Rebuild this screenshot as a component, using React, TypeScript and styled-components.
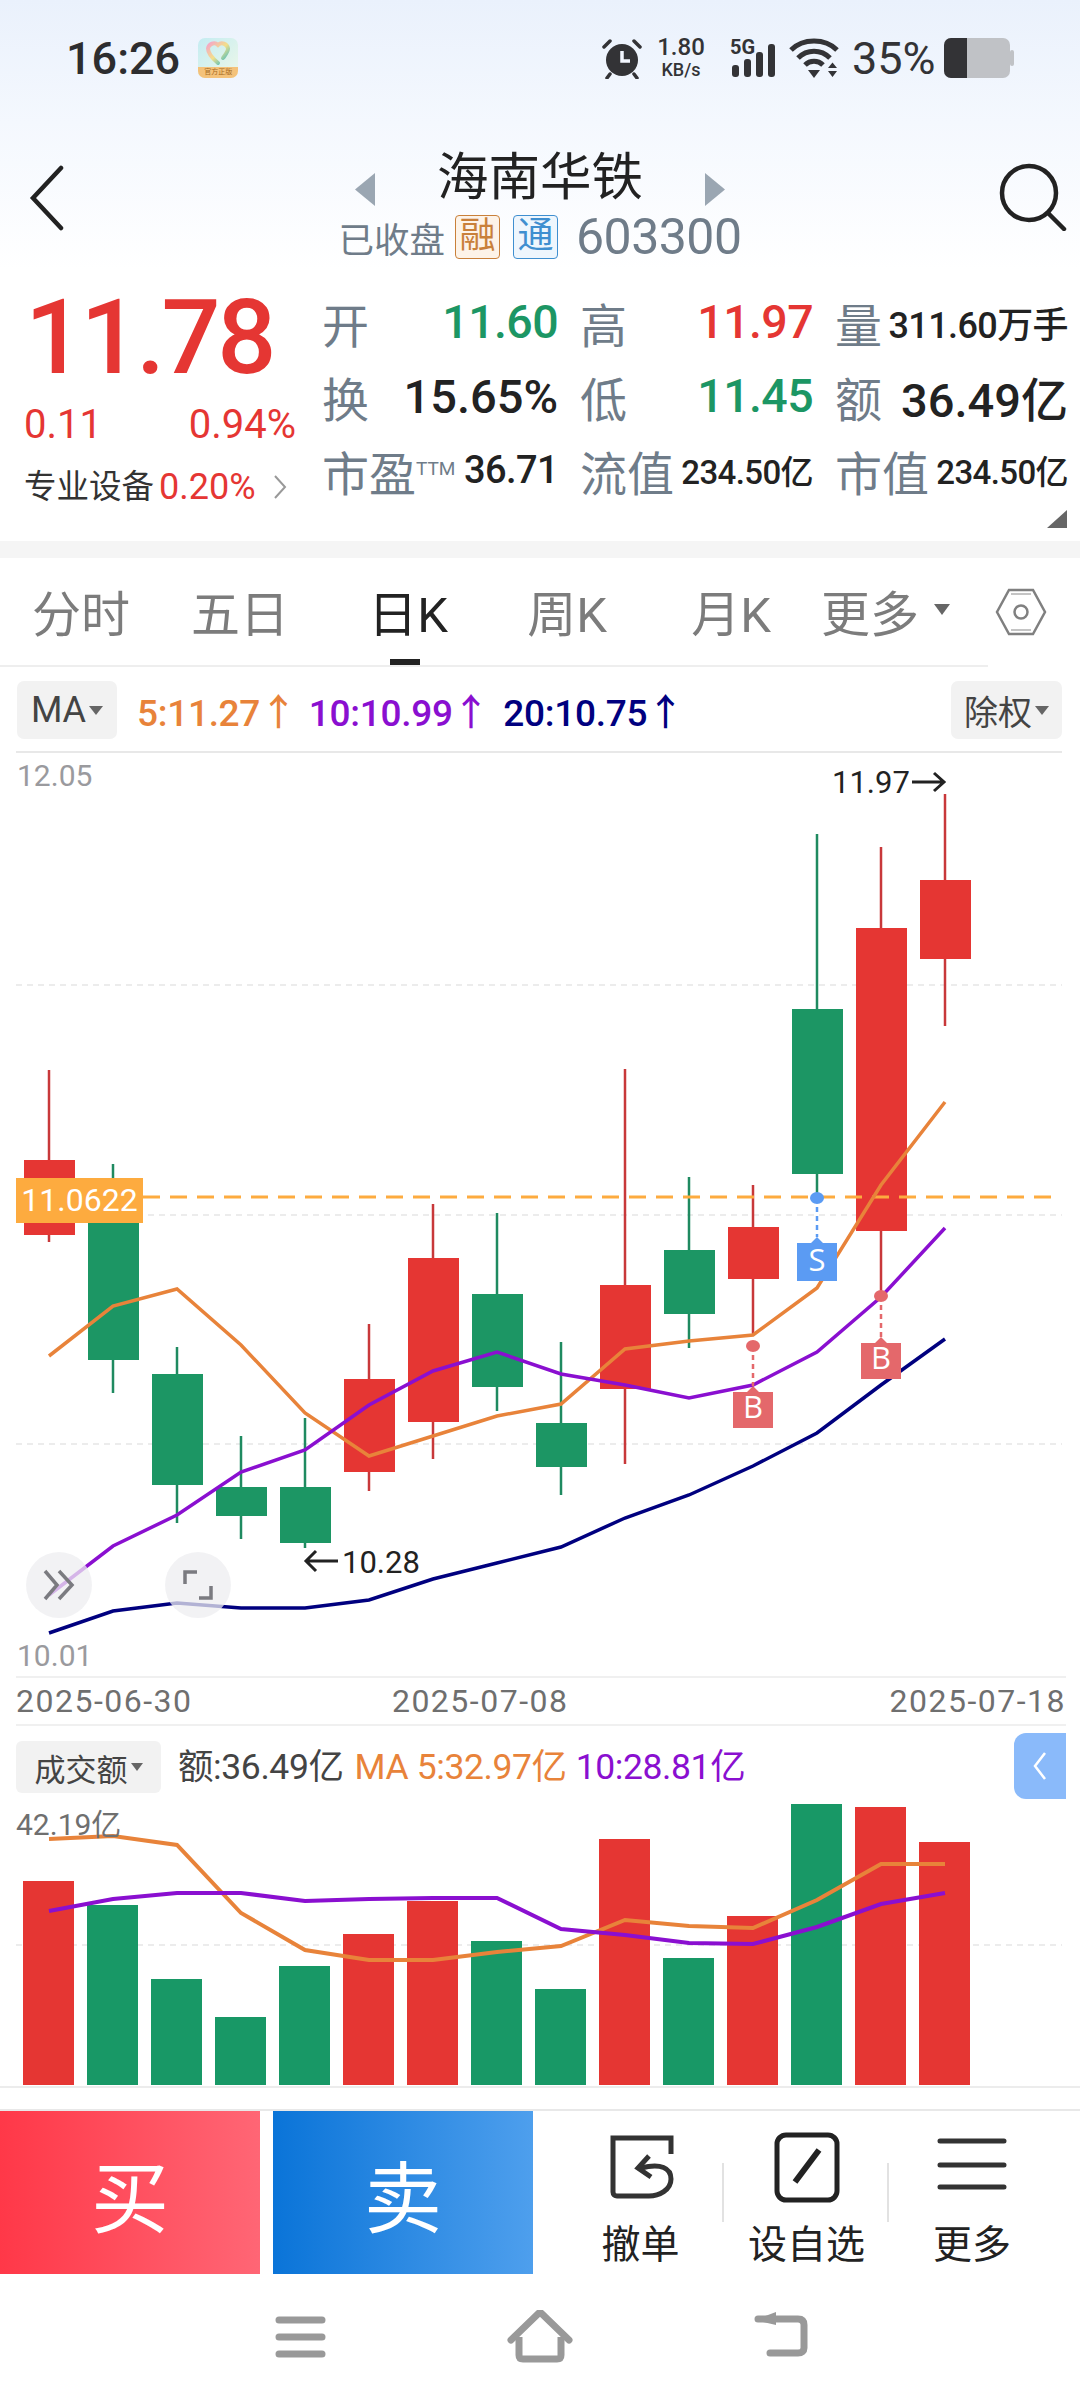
import { styled, createGlobalStyle } from "styled-components";

const RED = "#e53633";
const GREEN = "#1c9664";
const ORANGE = "#e8833a";
const PURPLE = "#8a0fd0";
const NAVY = "#00007f";
const GREY = "#6f7c89";

const GlobalStyle = createGlobalStyle`
  html, body {
    margin: 0;
    padding: 0;
    background: #fff;
  }
  body {
    font-family: Roboto, "Noto Sans CJK SC", sans-serif;
    color: #222;
  }
  * {
    box-sizing: border-box;
  }
`;

const Page = styled.div`
  width: 1080px;
  height: 2400px;
  overflow: hidden;
  background: #fff;
`;

/* 顶部 */
const Header = styled.header`
  height: 270px;
  background: linear-gradient(180deg, #eaf1fc 0%, #f4f8fe 45%, #ffffff 100%);
`;

const StatusBar = styled.div`
  height: 116px;
  padding: 0 66px;
  display: flex;
  align-items: center;
  justify-content: space-between;
`;

const StatusLeft = styled.div`
  display: flex;
  align-items: center;
  gap: 18px;
`;

const Time = styled.div`
  font-size: 45px;
  font-weight: 500;
  color: #2d2d2f;
`;

const AppIcon = styled.div`
  position: relative;
  width: 40px;
  height: 40px;
  border-radius: 7px;
  overflow: hidden;
  background: linear-gradient(135deg, #c4ecf2, #eef8e8);
  display: flex;
  justify-content: center;
`;

const AppIconFoot = styled.div`
  position: absolute;
  left: 0;
  right: 0;
  bottom: 0;
  height: 11px;
  background: #f4c27a;
  color: #a66a1e;
  font-size: 7px;
  line-height: 11px;
  text-align: center;
  white-space: nowrap;
`;

const StatusRight = styled.div`
  display: flex;
  align-items: center;
`;

const Speed = styled.div`
  width: 58px;
  margin-left: 9px;
  text-align: center;
  color: #333336;
  font-weight: 500;
  line-height: 1;
`;

const SpeedTop = styled.div`
  font-size: 24px;
  line-height: 23px;
`;

const SpeedBottom = styled.div`
  font-size: 18px;
  line-height: 21px;
`;

const Battery = styled.div`
  font-size: 45px;
  color: #333336;
  margin-left: 11px;
  width: 92px;
`;

const NavBar = styled.div`
  height: 154px;
  padding: 29px 13px 0 27px;
  display: grid;
  grid-template-columns: 80px 1fr 80px;
`;

const Center = styled.div`
  display: flex;
  flex-direction: column;
  align-items: center;
`;

const TitleRow = styled.div`
  height: 66px;
  display: flex;
  align-items: center;
  gap: 62px;
  margin-left: -14px;
`;

const Title = styled.div`
  font-size: 51.5px;
  line-height: 60px;
  color: #222;
`;

const SubRow = styled.div`
  display: flex;
  align-items: center;
  margin-top: 4px;
  height: 44px;
  margin-left: -14px;
  color: ${GREY};
`;

const SubText = styled.span`
  font-size: 35.5px;
  margin-right: -3px;
`;

const Badge = styled.span<{ $color: string; $bg: string }>`
  width: 45px;
  height: 44px;
  margin-left: 13px;
  border: 1.5px solid ${(p) => p.$color};
  border-radius: 4px;
  background: ${(p) => p.$bg};
  color: ${(p) => p.$color};
  font-size: 36px;
  line-height: 40px;
  text-align: center;
`;

const Code = styled.span`
  font-size: 50px;
  margin-left: 18px;
  letter-spacing: -0.5px;
`;

/* 行情 */
const Quote = styled.section`
  height: 271px;
  padding: 16px 12px 0 24px;
  position: relative;
  display: grid;
  grid-template-columns: 298px 1fr;
`;

const PriceCol = styled.div`
  display: flex;
  flex-direction: column;
`;

const Price = styled.div`
  font-size: 104px;
  line-height: 104px;
  font-weight: 500;
  color: ${RED};
  letter-spacing: -3.5px;
  margin-left: 1px;
`;

const ChangeRow = styled.div`
  display: flex;
  justify-content: space-between;
  margin: 12px 26px 0 0;
  font-size: 40px;
  line-height: 46px;
  color: ${RED};
`;

const SectorRow = styled.div`
  display: flex;
  align-items: center;
  margin-top: 17px;
  font-size: 32.5px;
  line-height: 44px;
  color: #333;
`;

const SectorPct = styled.span`
  color: ${RED};
  margin-left: 5px;
  font-size: 36px;
`;

const Stats = styled.div`
  display: grid;
  grid-template-columns: 233px 230px 233px;
  grid-auto-rows: 74px;
  column-gap: 25px;
  margin-top: -1px;
`;

const Stat = styled.div`
  display: flex;
  align-items: center;
  justify-content: space-between;
  white-space: nowrap;
`;

const StatLabel = styled.span`
  font-size: 47px;
  color: ${GREY};
`;

const Ttm = styled.sup`
  font-size: 19px;
  line-height: 0;
  vertical-align: 16px;
`;

const StatValue = styled.span<{ $color?: string; $size?: number; $nudge?: boolean }>`
  font-size: ${(p) => p.$size || 47}px;
  font-weight: 500;
  color: ${(p) => p.$color || "#222"};
  ${(p) => (p.$size ? "letter-spacing: -0.6px;" : "")}
  ${(p) => (p.$nudge ? "margin-right: -3px;" : "")}
`;

const Corner = styled.div`
  position: absolute;
  right: 13px;
  bottom: 13px;
  width: 20px;
  height: 18px;
  background: #666;
  clip-path: polygon(100% 0, 100% 100%, 0 100%);
`;

const Band = styled.div`
  height: 17px;
  background: #f5f5f5;
`;

/* 周期切换 */
const Tabs = styled.nav`
  height: 109px;
  padding: 0 0 0 8px;
  border-bottom: 2px solid #eeeeee;
  margin-right: 92px;
  display: flex;
  position: relative;
`;

const TabsWrap = styled.div`
  position: relative;
`;

const Tab = styled.div<{ $w: number; $active?: boolean }>`
  position: relative;
  width: ${(p) => p.$w}px;
  height: 107px;
  padding-top: 28px;
  text-align: center;
  font-size: 49px;
  line-height: 60px;
  color: ${(p) => (p.$active ? "#222" : "#7c7c7c")};
  ${(p) =>
    p.$active
      ? `&::after {
    content: "";
    position: absolute;
    left: 64px;
    bottom: 0;
    width: 30px;
    height: 6px;
    background: #222;
  }`
      : ""}
`;

const MoreTab = styled.div`
  height: 107px;
  padding: 28px 0 0 3px;
  display: flex;
  align-items: flex-start;
  font-size: 49px;
  line-height: 60px;
  color: #7c7c7c;
  white-space: nowrap;
`;

const Caret = styled.span<{ $size?: number; $color?: string }>`
  display: inline-block;
  width: 0;
  height: 0;
  border-left: ${(p) => (p.$size || 8)}px solid transparent;
  border-right: ${(p) => (p.$size || 8)}px solid transparent;
  border-top: ${(p) => (p.$size || 8) * 1.4}px solid ${(p) => p.$color || "#666"};
`;

const MoreCaret = styled(Caret)`
  margin: 18px 0 0 15px;
`;

const HexBtn = styled.div`
  position: absolute;
  left: 995px;
  top: 30px;
  width: 52px;
  height: 48px;
`;

/* 均线行 */
const MaRow = styled.div`
  height: 86px;
  margin: 0 18px 0 16px;
  border-bottom: 2px solid #e8e8e8;
  padding: 15px 0 13px 1px;
  display: flex;
  align-items: center;
`;

const Chip = styled.div<{ $w: number; $font?: number }>`
  width: ${(p) => p.$w}px;
  height: 58px;
  border-radius: 7px;
  background: #f2f2f2;
  color: #444;
  font-size: ${(p) => p.$font || 36}px;
  display: flex;
  align-items: center;
  justify-content: center;
  gap: 3px;
  white-space: nowrap;
`;

const MaText = styled.span<{ $color: string; $gap: number }>`
  color: ${(p) => p.$color};
  font-size: 37px;
  font-weight: 500;
  letter-spacing: -0.3px;
  margin-left: ${(p) => p.$gap}px;
  white-space: nowrap;
`;

const Spacer = styled.div`
  flex: 1;
`;

/* K线图 */
const ChartWrap = styled.div`
  position: relative;
  height: 923px;
`;

const ChartSvg = styled.svg`
  display: block;
  width: 1080px;
`;

const CostTag = styled.div`
  position: absolute;
  left: 16px;
  top: 425px;
  width: 127px;
  height: 45px;
  background: #fdab3f;
  color: #fff;
  font-size: 32px;
  line-height: 45px;
  text-align: center;
`;

const RoundBtn = styled.div<{ $left: number }>`
  position: absolute;
  left: ${(p) => p.$left}px;
  top: 799px;
  width: 66px;
  height: 66px;
  border-radius: 50%;
  background: rgba(238, 238, 240, 0.75);
  display: flex;
  align-items: center;
  justify-content: center;
`;

const DateRow = styled.div`
  height: 50px;
  margin: 0 14px 0 16px;
  border-top: 2px solid #f0f0f0;
  border-bottom: 2px solid #f0f0f0;
  display: flex;
  align-items: center;
  font-size: 32px;
  color: #6f6f6f;
  letter-spacing: 1.5px;
  white-space: nowrap;
`;

const DateCell = styled.span<{ $w: number }>`
  width: ${(p) => p.$w}px;
`;

/* 成交额 */
const VolHead = styled.div`
  position: relative;
  height: 73px;
  padding: 15px 0 0 16px;
  display: flex;
  align-items: flex-start;
`;

const VolChip = styled(Chip)`
  height: 52px;
  border-radius: 6px;
`;

const VolText = styled.span<{ $color: string; $gap: number }>`
  color: ${(p) => p.$color};
  font-size: 35.5px;
  line-height: 52px;
  margin-left: ${(p) => p.$gap}px;
  letter-spacing: -0.4px;
  white-space: nowrap;
`;

const SideTab = styled.div`
  position: absolute;
  left: 1014px;
  top: 7px;
  width: 52px;
  height: 66px;
  border-radius: 12px 0 0 12px;
  background: #8abafa;
  display: flex;
  align-items: center;
  justify-content: center;
`;

const VolWrap = styled.div`
  height: 289px;
  border-bottom: 2px solid #ececec;
  margin-bottom: 21px;
`;

const VolSvg = styled.svg`
  display: block;
  width: 1080px;
`;

/* 买卖 */
const ActionBar = styled.div`
  height: 166px;
  border-top: 2px solid #e8e8e8;
  display: flex;
`;

const TradeBtn = styled.div<{ $from: string; $to: string; $w: number }>`
  width: ${(p) => p.$w}px;
  height: 163px;
  background: linear-gradient(90deg, ${(p) => p.$from}, ${(p) => p.$to});
  color: #fff;
  font-size: 78px;
  display: flex;
  align-items: center;
  justify-content: center;
`;

const SellBtn = styled(TradeBtn)`
  margin-left: 13px;
`;

const Tools = styled.div`
  flex: 1;
  display: flex;
  padding-left: 24px;
  padding-right: 25px;
`;

const Tool = styled.div<{ $w: number; $divider?: boolean }>`
  position: relative;
  width: ${(p) => p.$w}px;
  display: flex;
  flex-direction: column;
  align-items: center;
  padding-top: 21px;
  font-size: 39px;
  line-height: 46px;
  color: #222;
  ${(p) =>
    p.$divider
      ? `&::after {
    content: "";
    position: absolute;
    right: 0;
    top: 52px;
    width: 2px;
    height: 59px;
    background: #e2e2e2;
  }`
      : ""}
`;

const ToolIcon = styled.svg`
  width: 72px;
  height: 72px;
  margin-bottom: 18px;
`;

const BottomNav = styled.div`
  height: 125px;
  display: grid;
  grid-template-columns: 300px 240px 245px;
`;

const NavCell = styled.div`
  display: flex;
  justify-content: flex-end;
  align-items: flex-start;
  padding-top: 35px;
`;

const NavIcon = styled.svg`
  width: 70px;
  height: 64px;
  transform: translateX(35px);
`;

type Candle = { x: number; hi: number; top: number; bot: number; lo: number; up: boolean };

const candles: Candle[] = [
  { x: 49, hi: 1070, top: 1160, bot: 1235, lo: 1242, up: true },
  { x: 113, hi: 1164, top: 1190, bot: 1360, lo: 1393, up: false },
  { x: 177, hi: 1347, top: 1374, bot: 1485, lo: 1523, up: false },
  { x: 241, hi: 1436, top: 1487, bot: 1516, lo: 1539, up: false },
  { x: 305, hi: 1418, top: 1487, bot: 1543, lo: 1548, up: false },
  { x: 369, hi: 1324, top: 1379, bot: 1472, lo: 1491, up: true },
  { x: 433, hi: 1204, top: 1258, bot: 1422, lo: 1459, up: true },
  { x: 497, hi: 1213, top: 1294, bot: 1387, lo: 1411, up: false },
  { x: 561, hi: 1342, top: 1423, bot: 1467, lo: 1495, up: false },
  { x: 625, hi: 1069, top: 1285, bot: 1389, lo: 1464, up: true },
  { x: 689, hi: 1177, top: 1250, bot: 1314, lo: 1348, up: false },
  { x: 753, hi: 1185, top: 1227, bot: 1279, lo: 1334, up: true },
  { x: 817, hi: 834, top: 1009, bot: 1174, lo: 1196, up: false },
  { x: 881, hi: 847, top: 928, bot: 1231, lo: 1297, up: true },
  { x: 945, hi: 794, top: 880, bot: 959, lo: 1026, up: true },
];

const xs = candles.map((c) => c.x);
const line = (ys: number[]) => ys.map((y, i) => `${xs[i]},${y}`).join(" ");

const ma5 = [1356, 1306, 1289, 1345, 1413, 1456, 1436, 1416, 1404, 1349, 1341, 1335, 1288, 1185, 1102];
const ma10 = [1595, 1546, 1515, 1472, 1450, 1405, 1371, 1352, 1374, 1385, 1398, 1385, 1352, 1297, 1228];
const ma20 = [1633, 1611, 1603, 1608, 1608, 1600, 1579, 1563, 1547, 1518, 1495, 1466, 1433, 1385, 1339];

const bars = [
  { top: 1881, up: true },
  { top: 1905, up: false },
  { top: 1979, up: false },
  { top: 2017, up: false },
  { top: 1966, up: false },
  { top: 1934, up: true },
  { top: 1901, up: true },
  { top: 1941, up: false },
  { top: 1989, up: false },
  { top: 1839, up: true },
  { top: 1958, up: false },
  { top: 1916, up: true },
  { top: 1804, up: false },
  { top: 1807, up: true },
  { top: 1842, up: true },
];

const volMa5 = [1839, 1836, 1845, 1913, 1950, 1960, 1960, 1952, 1946, 1920, 1926, 1928, 1900, 1864, 1864];
const volMa10 = [1911, 1899, 1893, 1893, 1901, 1899, 1898, 1898, 1929, 1935, 1943, 1944, 1927, 1904, 1893];

const Signal = ({ x, dot, top, bottom, color, label }: { x: number; dot: number; top: number; bottom: number; color: string; label: string }) => (
  <g>
    <line x1={x} y1={dot} x2={x} y2={top} stroke={color} strokeWidth="2.5" strokeDasharray="5 4" />
    <ellipse cx={x} cy={dot} rx="7" ry="6" fill={color} />
    <path d={`M${x - 20} ${top + 6}H${x - 6}L${x} ${top}L${x + 6} ${top + 6}H${x + 20}V${bottom}H${x - 20}Z`} fill={color} />
    <text x={x} y={bottom - 10} textAnchor="middle" fontSize="31" fill="#fff" fontFamily="'Open Sans', sans-serif">
      {label}
    </text>
  </g>
);

export default function App() {
  return (
    <Page>
      <GlobalStyle />
      <Header>
        <StatusBar>
          <StatusLeft>
            <Time>16:26</Time>
            <AppIcon>
              <svg width="30" height="30" viewBox="0 0 30 30">
                <defs>
                  <linearGradient id="appHeart" x1="0" y1="0" x2="1" y2="1">
                    <stop offset="0" stopColor="#f4a6c8" />
                    <stop offset="0.5" stopColor="#f3e08a" />
                    <stop offset="1" stopColor="#29b6c9" />
                  </linearGradient>
                </defs>
                <path d="M15 25C9 20 5 15 5 10.500A6 6 0 0 1 15 7A6 6 0 0 1 25 10.500C25 14 22 17 20 20" fill="none" stroke="url(#appHeart)" strokeWidth="4" strokeLinecap="round" />
              </svg>
              <AppIconFoot>官方正版</AppIconFoot>
            </AppIcon>
          </StatusLeft>
          <StatusRight>
            <svg width="42" height="42" viewBox="0 0 42 42">
              <circle cx="21" cy="23" r="16" fill="#333336" />
              <path d="M21 14V24H29" fill="none" stroke="#f2f6fe" strokeWidth="3.500" />
              <path d="M3 10L9 4M39 10L33 4M9 37L6 41M33 37L36 41" stroke="#333336" strokeWidth="3.500" strokeLinecap="round" />
            </svg>
            <Speed>
              <SpeedTop>1.80</SpeedTop>
              <SpeedBottom>KB/s</SpeedBottom>
            </Speed>
            <svg width="50" height="50" viewBox="0 -4 50 50" style={{ marginLeft: 20, marginRight: 9 }}>
              <text x="0" y="17" fontSize="20" fontWeight="700" fill="#333336" fontFamily="Roboto, sans-serif">5G</text>
              <rect x="2" y="28" width="7" height="12" rx="3" fill="#333336" />
              <rect x="14" y="22" width="7" height="18" rx="3" fill="#333336" />
              <rect x="26" y="15" width="7" height="25" rx="3" fill="#333336" />
              <rect x="38" y="7" width="7" height="33" rx="3" fill="#333336" />
            </svg>
            <svg width="52" height="42" viewBox="0 0 52 42">
              <path d="M2 13C14 1 36 1 48 13M9 21C18 12 32 12 41 21M16 28C21 23 29 23 34 28" fill="none" stroke="#333336" strokeWidth="5" />
              <path d="M19 33H31L25 41Z" fill="#333336" />
              <path d="M39 31L43.500 25.500L48 31ZM39 34H48L43.500 40Z" fill="#333336" />
            </svg>
            <Battery>35%</Battery>
            <svg width="70" height="42" viewBox="0 0 70 42">
              <rect x="0" y="1" width="66" height="40" rx="7" fill="#c0c2c6" />
              <path d="M7 1H23V41H7A7 7 0 0 1 0 34V8A7 7 0 0 1 7 1Z" fill="#333336" />
              <rect x="66" y="13" width="4" height="16" rx="2" fill="#c0c2c6" />
            </svg>
          </StatusRight>
        </StatusBar>
        <NavBar>
          <svg width="40" height="66" viewBox="0 0 40 66" style={{ marginTop: 20 }}>
            <path d="M34 3L6 33L34 63" fill="none" stroke="#222" strokeWidth="4.500" strokeLinecap="round" />
          </svg>
          <Center>
            <TitleRow>
              <svg width="20" height="33" viewBox="0 0 20 33" style={{ marginTop: 22 }}>
                <path d="M20 0V33L0 16.500Z" fill="#9aa6b2" />
              </svg>
              <Title>海南华铁</Title>
              <svg width="20" height="33" viewBox="0 0 20 33" style={{ marginTop: 22 }}>
                <path d="M0 0V33L20 16.500Z" fill="#9aa6b2" />
              </svg>
            </TitleRow>
            <SubRow>
              <SubText>已收盘</SubText>
              <Badge $color="#c9803a" $bg="#fdf3e8">融</Badge>
              <Badge $color="#3f8fd0" $bg="#eef6fd">通</Badge>
              <Code>603300</Code>
            </SubRow>
          </Center>
          <svg width="70" height="68" viewBox="0 0 70 68" style={{ marginTop: 18, justifySelf: "end" }}>
            <circle cx="32" cy="30" r="27" fill="none" stroke="#222" strokeWidth="4.500" />
            <path d="M51 50L67 66" stroke="#222" strokeWidth="4.500" strokeLinecap="round" />
          </svg>
        </NavBar>
      </Header>

      <Quote>
        <PriceCol>
          <Price>11.78</Price>
          <ChangeRow>
            <span>0.11</span>
            <span>0.94%</span>
          </ChangeRow>
          <SectorRow>
            专业设备
            <SectorPct>0.20%</SectorPct>
            <svg width="14" height="26" viewBox="0 0 14 26" style={{ marginLeft: 17 }}>
              <path d="M2 2L12 13L2 24" fill="none" stroke="#999" strokeWidth="2" />
            </svg>
          </SectorRow>
        </PriceCol>
        <Stats>
          <Stat><StatLabel>开</StatLabel><StatValue $color={GREEN} $size={46.500} $nudge>11.60</StatValue></Stat>
          <Stat><StatLabel>高</StatLabel><StatValue $color={RED} $size={46.500} $nudge>11.97</StatValue></Stat>
          <Stat><StatLabel>量</StatLabel><StatValue $size={36}>311.60万手</StatValue></Stat>
          <Stat><StatLabel>换</StatLabel><StatValue $nudge>15.65%</StatValue></Stat>
          <Stat><StatLabel>低</StatLabel><StatValue $color={GREEN} $size={46.500} $nudge>11.45</StatValue></Stat>
          <Stat><StatLabel>额</StatLabel><StatValue>36.49亿</StatValue></Stat>
          <Stat><StatLabel>市盈<Ttm>TTM</Ttm></StatLabel><StatValue $size={38} $nudge>36.71</StatValue></Stat>
          <Stat><StatLabel>流值</StatLabel><StatValue $size={33} $nudge>234.50亿</StatValue></Stat>
          <Stat><StatLabel>市值</StatLabel><StatValue $size={33}>234.50亿</StatValue></Stat>
        </Stats>
        <Corner />
      </Quote>
      <Band />

      <TabsWrap>
        <Tabs>
          <Tab $w={146}>分时</Tab>
          <Tab $w={172}>五日</Tab>
          <Tab $w={164} $active>日K</Tab>
          <Tab $w={154}>周K</Tab>
          <Tab $w={174}>月K</Tab>
          <MoreTab>更多<MoreCaret /></MoreTab>
        </Tabs>
        <HexBtn>
          <svg width="52" height="48" viewBox="0 0 52 48">
            <path d="M14 2H38L50 24L38 46H14L2 24Z" fill="none" stroke="#808080" strokeWidth="2.500" />
            <path d="M16 6H36M16 42H36" stroke="#c4c4c4" strokeWidth="2" />
            <circle cx="26" cy="24" r="6.500" fill="none" stroke="#808080" strokeWidth="2.500" />
          </svg>
        </HexBtn>
      </TabsWrap>

      <MaRow>
        <Chip $w={100}>MA<Caret $size={7} /></Chip>
        <MaText $color={ORANGE} $gap={20}>5:11.27↑</MaText>
        <MaText $color={PURPLE} $gap={12}>10:10.99↑</MaText>
        <MaText $color={NAVY} $gap={14}>20:10.75↑</MaText>
        <Spacer />
        <Chip $w={111} $font={34}>除权<Caret $size={7} /></Chip>
      </MaRow>

      <ChartWrap>
        <ChartSvg height="923" viewBox="0 753 1080 923">
          {[985, 1215, 1444].map((y) => (
            <line key={y} x1="16" x2="1062" y1={y} y2={y} stroke="#ececec" strokeWidth="2" strokeDasharray="6 5" />
          ))}
          {candles.map((c) => {
            const color = c.up ? RED : GREEN;
            const wick = c.up ? "#c8383a" : "#1f8a60";
            return (
              <g key={c.x}>
                <line x1={c.x} x2={c.x} y1={c.hi} y2={c.lo} stroke={wick} strokeWidth="2.500" />
                <rect x={c.x - 25} y={c.top} width="51" height={c.bot - c.top} fill={color} />
              </g>
            );
          })}
          <line x1="143" x2="1060" y1="1197" y2="1197" stroke="#fdab3f" strokeWidth="3" strokeDasharray="17 10" />
          <polyline points={line(ma5)} fill="none" stroke={ORANGE} strokeWidth="3.500" />
          <polyline points={line(ma10)} fill="none" stroke={PURPLE} strokeWidth="3.500" />
          <polyline points={line(ma20)} fill="none" stroke={NAVY} strokeWidth="3.500" />
          <Signal x={817} dot={1198} top={1237} bottom={1281} color="#5b9bf3" label="S" />
          <Signal x={753} dot={1346} top={1386} bottom={1428} color="#e4686b" label="B" />
          <Signal x={881} dot={1296} top={1337} bottom={1379} color="#e4686b" label="B" />
          <text x="17" y="786" fontSize="30" fill="#9a9a9e">12.05</text>
          <text x="17" y="1666" fontSize="30" fill="#9a9a9e">10.01</text>
          <text x="832" y="793" fontSize="31" fill="#222">11.97</text>
          <path d="M912 782H943M934 773L944 782L934 791" fill="none" stroke="#222" strokeWidth="3" />
          <path d="M338 1561H306M316 1551L306 1561L316 1571" fill="none" stroke="#222" strokeWidth="3" />
          <text x="342" y="1573" fontSize="31" fill="#222">10.28</text>
        </ChartSvg>
        <CostTag>11.0622</CostTag>
        <RoundBtn $left={26}>
          <svg width="34" height="34" viewBox="0 0 34 34">
            <path d="M3 3L15 17L3 31M17 3L30 17L17 31" fill="none" stroke="#7b7b80" strokeWidth="3.500" />
          </svg>
        </RoundBtn>
        <RoundBtn $left={165}>
          <svg width="34" height="34" viewBox="0 0 34 34">
            <path d="M4 16V4H16M18 30H30V18" fill="none" stroke="#7b7b80" strokeWidth="3.500" />
          </svg>
        </RoundBtn>
      </ChartWrap>
      <DateRow>
        <DateCell $w={377}>2025-06-30</DateCell>
        <DateCell $w={499}>2025-07-08</DateCell>
        <span>2025-07-18</span>
      </DateRow>

      <VolHead>
        <VolChip $w={145} $font={31}>成交额<Caret $size={6} /></VolChip>
        <VolText $color="#444" $gap={17}>额:36.49亿</VolText>
        <VolText $color={ORANGE} $gap={11}>MA 5:32.97亿</VolText>
        <VolText $color={PURPLE} $gap={9}>10:28.81亿</VolText>
        <SideTab>
          <svg width="16" height="30" viewBox="0 0 16 30">
            <path d="M13 2L3 15L13 28" fill="none" stroke="#fff" strokeWidth="2.500" />
          </svg>
        </SideTab>
      </VolHead>
      <VolWrap>
        <VolSvg height="287" viewBox="0 1799 1080 287">
          <line x1="16" x2="1062" y1="1945" y2="1945" stroke="#ececec" strokeWidth="2" strokeDasharray="6 5" />
          {bars.map((b, i) => (
            <rect key={xs[i]} x={xs[i] - 26} y={b.top} width="51" height={2085 - b.top} fill={b.up ? RED : "#189866"} />
          ))}
          <polyline points={line(volMa5)} fill="none" stroke={ORANGE} strokeWidth="4" />
          <polyline points={line(volMa10)} fill="none" stroke={PURPLE} strokeWidth="4" />
          <text x="16" y="1835" fontSize="30" fill="#6f6f6f">42.19亿</text>
        </VolSvg>
      </VolWrap>

      <ActionBar>
        <TradeBtn $w={260} $from="#ff3848" $to="#ff6675">买</TradeBtn>
        <SellBtn $w={260} $from="#0a74d8" $to="#4e9fed">卖</SellBtn>
        <Tools>
          <Tool $w={167} $divider>
            <ToolIcon viewBox="0 0 72 72">
              <path d="M66 22V6H8V60C8 63 10 64 12 64H44C54 64 66 58 66 47C66 36 56 31 36 36" fill="none" stroke="#333" strokeWidth="5" />
              <path d="M44 24L33 36L46 45" fill="none" stroke="#333" strokeWidth="5" />
            </ToolIcon>
            撤单
          </Tool>
          <Tool $w={165} $divider>
            <ToolIcon viewBox="0 0 72 72">
              <rect x="6" y="3" width="60" height="65" rx="9" fill="none" stroke="#222" strokeWidth="5" />
              <path d="M48 18L24 50" stroke="#222" strokeWidth="6" />
            </ToolIcon>
            设自选
          </Tool>
          <Tool $w={166}>
            <ToolIcon viewBox="0 0 72 72">
              <path d="M4 9H68M4 33H68M4 55H68" stroke="#333" strokeWidth="5" strokeLinecap="round" />
            </ToolIcon>
            更多
          </Tool>
        </Tools>
      </ActionBar>

      <BottomNav>
        <NavCell>
          <NavIcon viewBox="0 0 70 64">
            <path d="M14 10H57M14 27H57M14 44H57" stroke="#999" strokeWidth="7" strokeLinecap="round" />
          </NavIcon>
        </NavCell>
        <NavCell>
          <NavIcon viewBox="0 0 70 64">
            <path d="M6 30L35 2L64 30" fill="none" stroke="#999" strokeWidth="7" strokeLinejoin="round" strokeLinecap="round" />
            <path d="M14 27V45C14 48 15 49 18 49H52C55 49 56 48 56 45V27" fill="none" stroke="#999" strokeWidth="7" />
          </NavIcon>
        </NavCell>
        <NavCell>
          <NavIcon viewBox="0 0 70 64">
            <path d="M8 9H48C52 9 54 11 54 15V38C54 41 52 43 48 43H20" fill="none" stroke="#999" strokeWidth="7" strokeLinecap="round" />
            <path d="M26 2L5 10L26 15Z" fill="#999" />
          </NavIcon>
        </NavCell>
      </BottomNav>
    </Page>
  );
}
